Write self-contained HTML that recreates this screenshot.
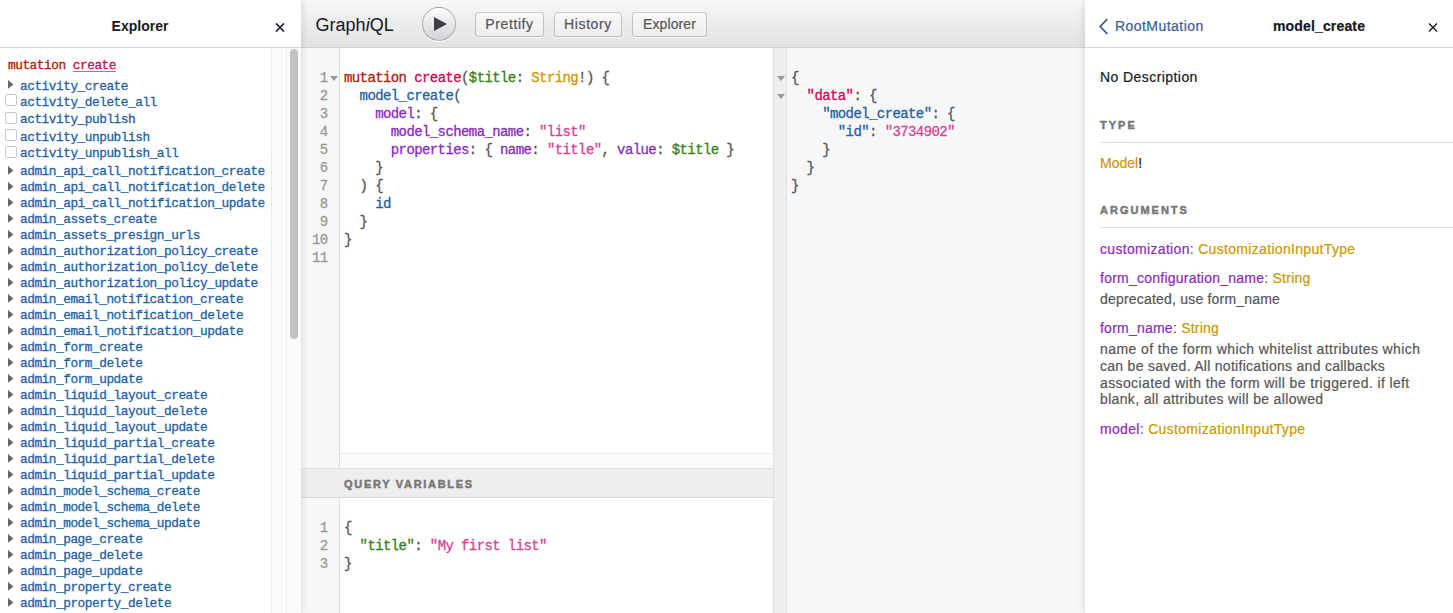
<!DOCTYPE html>
<html><head><meta charset="utf-8">
<style>
*{box-sizing:border-box;margin:0;padding:0}
html,body{width:1453px;height:613px;overflow:hidden;background:#fff;font-family:"Liberation Sans",sans-serif;color:#141823}
.abs{position:absolute}
.mono{font-family:"Liberation Mono",monospace;-webkit-text-stroke:0.3px}
/* explorer */
#exp{left:0;top:0;width:301px;height:613px;background:#fff;box-shadow:0 0 8px rgba(0,0,0,.15);z-index:3}
#exp .hdr{left:0;top:0;width:301px;height:48px;border-bottom:1px solid #d6d6d6;background:#fff}
#exp .ttl{left:0;top:18px;width:280px;text-align:center;font-weight:bold;font-size:14px;line-height:17px}
#list{left:0;top:0;width:271px;height:613px;overflow:hidden}
#list .cb{position:absolute;left:5px;width:12px;height:12px;border:1px solid #c8c8c8;border-radius:2px;background:#fff}
#list .tri{position:absolute;left:8px}
#list .row{position:absolute;left:0;height:16px;white-space:pre;font-size:12.8px;letter-spacing:-0.48px;line-height:16px;color:#1F61A0}
.col1{left:271px;top:48px;width:16px;height:565px;background:#fafafa;border-left:1px solid #ececec;border-right:1px solid #ececec}
.track{left:287px;top:48px;width:14px;height:565px;background:#fafafa}
.thumb{left:290px;top:49px;width:8px;height:290px;background:#c2c2c2;border-radius:4px}
/* graphiql */
#gq{left:301px;top:0;width:784px;height:613px;background:#fff}
.topbar{left:0;top:0;width:784px;height:48px;background:linear-gradient(#f7f7f7,#e2e2e2);border-bottom:1px solid #d0d0d0}
.btn{position:absolute;top:12px;height:25px;letter-spacing:0.6px;padding-top:1px;border-radius:3px;background:linear-gradient(#f9f9f9,#ececec);box-shadow:inset 0 0 0 1px rgba(0,0,0,0.2),0 1px 0 rgba(255,255,255,.7),inset 0 1px #fff;color:#555;font-size:14px;line-height:23px;text-align:center;-webkit-text-stroke:0.2px #555}
.exec{left:121px;top:7px;width:34px;height:34px;border-radius:17px;border:1px solid rgba(0,0,0,.25);background:linear-gradient(#fdfdfd,#d2d3d6);box-shadow:0 1px 0 #fff}
.gutter{left:0;width:39px;background:#f7f7f7;border-right:1px solid #ddd}
.code{position:absolute;white-space:pre;font-size:14px;letter-spacing:-0.6px;line-height:18px;height:18px}
.ln{position:absolute;white-space:pre;font-size:14px;letter-spacing:-0.6px;line-height:18px;height:18px;color:#999;text-align:right;width:26.6px;left:0}
.kw{color:#B11A04}.def{color:#D2054E}.pn{color:#555}.var{color:#397D13}.atom{color:#CA9800}.prop{color:#1F61A0}.str{color:#D64292}.attr{color:#8B2BB9}
.fold{position:absolute;width:0;height:0;border-left:4px solid transparent;border-right:4px solid transparent;border-top:5px solid #999}
/* doc */
#doc{left:1085px;top:0;width:368px;height:613px;background:#fff;box-shadow:0 0 8px rgba(0,0,0,.15)}
.cat{position:absolute;left:15px;right:0;font-size:11px;font-weight:bold;letter-spacing:2px;color:#777;border-bottom:1px solid #e0e0e0}
.dt{position:absolute;left:15px;font-size:14px;line-height:17px;white-space:pre;color:#555;-webkit-text-stroke:0.2px}
.catt{position:absolute;left:15px;font-size:11px;line-height:12px;font-weight:bold;letter-spacing:2px;color:#777;white-space:pre;-webkit-text-stroke:0.5px #777}
.an{color:#8B2BB9}.tn{color:#CA9800}
</style></head><body>

<div id="exp" class="abs">
  <div class="hdr abs"></div>
  <div class="ttl abs">Explorer</div>
  <div class="abs" style="left:275px;top:23px;width:10px;height:9px">
    <svg width="10" height="9" viewBox="0 0 10 9" style="display:block"><path d="M1 0.5 L9 8.5 M9 0.5 L1 8.5" stroke="#141823" stroke-width="1.6"/></svg>
  </div>
  <div id="list" class="abs mono">
<div class="row" style="left:8px;top:57.80px"><span class="kw">mutation</span> <span class="def" style="text-decoration:underline;text-decoration-color:#888;text-underline-offset:2px">create</span></div>
<svg class="tri" style="top:80.20px" width="6" height="9" viewBox="0 0 6 9"><path d="M0 0 L5.4 4.4 L0 8.8Z" fill="#666"/></svg><div class="row" style="left:20px;top:78.60px">activity_create</div>
<span class="cb" style="top:94.30px"></span><div class="row" style="left:20px;top:94.70px">activity_delete_all</div>
<span class="cb" style="top:111.50px"></span><div class="row" style="left:20px;top:111.90px">activity_publish</div>
<span class="cb" style="top:129.20px"></span><div class="row" style="left:20px;top:129.60px">activity_unpublish</div>
<span class="cb" style="top:145.90px"></span><div class="row" style="left:20px;top:146.30px">activity_unpublish_all</div>
<svg class="tri" style="top:165.50px" width="6" height="9" viewBox="0 0 6 9"><path d="M0 0 L5.4 4.4 L0 8.8Z" fill="#666"/></svg><div class="row" style="left:20px;top:163.90px">admin_api_call_notification_create</div>
<svg class="tri" style="top:181.50px" width="6" height="9" viewBox="0 0 6 9"><path d="M0 0 L5.4 4.4 L0 8.8Z" fill="#666"/></svg><div class="row" style="left:20px;top:179.90px">admin_api_call_notification_delete</div>
<svg class="tri" style="top:197.50px" width="6" height="9" viewBox="0 0 6 9"><path d="M0 0 L5.4 4.4 L0 8.8Z" fill="#666"/></svg><div class="row" style="left:20px;top:195.90px">admin_api_call_notification_update</div>
<svg class="tri" style="top:213.50px" width="6" height="9" viewBox="0 0 6 9"><path d="M0 0 L5.4 4.4 L0 8.8Z" fill="#666"/></svg><div class="row" style="left:20px;top:211.90px">admin_assets_create</div>
<svg class="tri" style="top:229.50px" width="6" height="9" viewBox="0 0 6 9"><path d="M0 0 L5.4 4.4 L0 8.8Z" fill="#666"/></svg><div class="row" style="left:20px;top:227.90px">admin_assets_presign_urls</div>
<svg class="tri" style="top:245.50px" width="6" height="9" viewBox="0 0 6 9"><path d="M0 0 L5.4 4.4 L0 8.8Z" fill="#666"/></svg><div class="row" style="left:20px;top:243.90px">admin_authorization_policy_create</div>
<svg class="tri" style="top:261.50px" width="6" height="9" viewBox="0 0 6 9"><path d="M0 0 L5.4 4.4 L0 8.8Z" fill="#666"/></svg><div class="row" style="left:20px;top:259.90px">admin_authorization_policy_delete</div>
<svg class="tri" style="top:277.50px" width="6" height="9" viewBox="0 0 6 9"><path d="M0 0 L5.4 4.4 L0 8.8Z" fill="#666"/></svg><div class="row" style="left:20px;top:275.90px">admin_authorization_policy_update</div>
<svg class="tri" style="top:293.50px" width="6" height="9" viewBox="0 0 6 9"><path d="M0 0 L5.4 4.4 L0 8.8Z" fill="#666"/></svg><div class="row" style="left:20px;top:291.90px">admin_email_notification_create</div>
<svg class="tri" style="top:309.50px" width="6" height="9" viewBox="0 0 6 9"><path d="M0 0 L5.4 4.4 L0 8.8Z" fill="#666"/></svg><div class="row" style="left:20px;top:307.90px">admin_email_notification_delete</div>
<svg class="tri" style="top:325.50px" width="6" height="9" viewBox="0 0 6 9"><path d="M0 0 L5.4 4.4 L0 8.8Z" fill="#666"/></svg><div class="row" style="left:20px;top:323.90px">admin_email_notification_update</div>
<svg class="tri" style="top:341.50px" width="6" height="9" viewBox="0 0 6 9"><path d="M0 0 L5.4 4.4 L0 8.8Z" fill="#666"/></svg><div class="row" style="left:20px;top:339.90px">admin_form_create</div>
<svg class="tri" style="top:357.50px" width="6" height="9" viewBox="0 0 6 9"><path d="M0 0 L5.4 4.4 L0 8.8Z" fill="#666"/></svg><div class="row" style="left:20px;top:355.90px">admin_form_delete</div>
<svg class="tri" style="top:373.50px" width="6" height="9" viewBox="0 0 6 9"><path d="M0 0 L5.4 4.4 L0 8.8Z" fill="#666"/></svg><div class="row" style="left:20px;top:371.90px">admin_form_update</div>
<svg class="tri" style="top:389.50px" width="6" height="9" viewBox="0 0 6 9"><path d="M0 0 L5.4 4.4 L0 8.8Z" fill="#666"/></svg><div class="row" style="left:20px;top:387.90px">admin_liquid_layout_create</div>
<svg class="tri" style="top:405.50px" width="6" height="9" viewBox="0 0 6 9"><path d="M0 0 L5.4 4.4 L0 8.8Z" fill="#666"/></svg><div class="row" style="left:20px;top:403.90px">admin_liquid_layout_delete</div>
<svg class="tri" style="top:421.50px" width="6" height="9" viewBox="0 0 6 9"><path d="M0 0 L5.4 4.4 L0 8.8Z" fill="#666"/></svg><div class="row" style="left:20px;top:419.90px">admin_liquid_layout_update</div>
<svg class="tri" style="top:437.50px" width="6" height="9" viewBox="0 0 6 9"><path d="M0 0 L5.4 4.4 L0 8.8Z" fill="#666"/></svg><div class="row" style="left:20px;top:435.90px">admin_liquid_partial_create</div>
<svg class="tri" style="top:453.50px" width="6" height="9" viewBox="0 0 6 9"><path d="M0 0 L5.4 4.4 L0 8.8Z" fill="#666"/></svg><div class="row" style="left:20px;top:451.90px">admin_liquid_partial_delete</div>
<svg class="tri" style="top:469.50px" width="6" height="9" viewBox="0 0 6 9"><path d="M0 0 L5.4 4.4 L0 8.8Z" fill="#666"/></svg><div class="row" style="left:20px;top:467.90px">admin_liquid_partial_update</div>
<svg class="tri" style="top:485.50px" width="6" height="9" viewBox="0 0 6 9"><path d="M0 0 L5.4 4.4 L0 8.8Z" fill="#666"/></svg><div class="row" style="left:20px;top:483.90px">admin_model_schema_create</div>
<svg class="tri" style="top:501.50px" width="6" height="9" viewBox="0 0 6 9"><path d="M0 0 L5.4 4.4 L0 8.8Z" fill="#666"/></svg><div class="row" style="left:20px;top:499.90px">admin_model_schema_delete</div>
<svg class="tri" style="top:517.50px" width="6" height="9" viewBox="0 0 6 9"><path d="M0 0 L5.4 4.4 L0 8.8Z" fill="#666"/></svg><div class="row" style="left:20px;top:515.90px">admin_model_schema_update</div>
<svg class="tri" style="top:533.50px" width="6" height="9" viewBox="0 0 6 9"><path d="M0 0 L5.4 4.4 L0 8.8Z" fill="#666"/></svg><div class="row" style="left:20px;top:531.90px">admin_page_create</div>
<svg class="tri" style="top:549.50px" width="6" height="9" viewBox="0 0 6 9"><path d="M0 0 L5.4 4.4 L0 8.8Z" fill="#666"/></svg><div class="row" style="left:20px;top:547.90px">admin_page_delete</div>
<svg class="tri" style="top:565.50px" width="6" height="9" viewBox="0 0 6 9"><path d="M0 0 L5.4 4.4 L0 8.8Z" fill="#666"/></svg><div class="row" style="left:20px;top:563.90px">admin_page_update</div>
<svg class="tri" style="top:581.50px" width="6" height="9" viewBox="0 0 6 9"><path d="M0 0 L5.4 4.4 L0 8.8Z" fill="#666"/></svg><div class="row" style="left:20px;top:579.90px">admin_property_create</div>
<svg class="tri" style="top:597.50px" width="6" height="9" viewBox="0 0 6 9"><path d="M0 0 L5.4 4.4 L0 8.8Z" fill="#666"/></svg><div class="row" style="left:20px;top:595.90px">admin_property_delete</div>
</div>
  <div class="col1 abs"></div>
  <div class="track abs"></div>
  <div class="thumb abs"></div>
</div>

<div id="gq" class="abs">
  <div class="topbar abs"></div>
  <div class="abs" style="left:14.6px;top:13.3px;font-size:18px;line-height:24px;white-space:pre">Graph<i>i</i>QL</div>
  <div class="exec abs"><svg width="34" height="34" viewBox="0 0 34 34" style="position:absolute;left:-1px;top:-1px"><path d="M12 10 L25 17 L12 24 Z" fill="#3d3e43"/></svg></div>
  <div class="btn" style="left:174px;width:69px">Prettify</div>
  <div class="btn" style="left:253px;width:68px">History</div>
  <div class="btn" style="left:331px;width:75px;letter-spacing:0.1px">Explorer</div>
  <!-- query editor -->
  <div class="abs" style="left:0;top:48px;width:472px;height:420px;background:#fff"></div>
  <div class="gutter abs" style="top:48px;height:405px"></div>
  <div class="abs" style="left:0;top:453px;width:39px;height:15px;background:#f7f7f7;border-right:1px solid #ddd"></div>
  <div class="abs" style="left:39px;top:453px;width:433px;height:15px;background:#fafafa;border-top:1px solid #e8e8e8"></div>
  <div class="ln mono" style="top:69.04px">1</div>
<div class="code mono" style="left:43px;top:69.04px"><span class="kw">mutation</span> <span class="def">create</span><span class="pn">(</span><span class="var">$title</span><span class="pn">: </span><span class="atom">String</span><span class="pn">!) {</span></div>
<div class="ln mono" style="top:87.04px">2</div>
<div class="code mono" style="left:43px;top:87.04px">  <span class="prop">model_create</span><span class="pn">(</span></div>
<div class="ln mono" style="top:105.04px">3</div>
<div class="code mono" style="left:43px;top:105.04px">    <span class="attr">model</span><span class="pn">: {</span></div>
<div class="ln mono" style="top:123.04px">4</div>
<div class="code mono" style="left:43px;top:123.04px">      <span class="attr">model_schema_name</span><span class="pn">: </span><span class="str">"list"</span></div>
<div class="ln mono" style="top:141.04px">5</div>
<div class="code mono" style="left:43px;top:141.04px">      <span class="attr">properties</span><span class="pn">: { </span><span class="attr">name</span><span class="pn">: </span><span class="str">"title"</span><span class="pn">, </span><span class="attr">value</span><span class="pn">: </span><span class="var">$title</span><span class="pn"> }</span></div>
<div class="ln mono" style="top:159.04px">6</div>
<div class="code mono" style="left:43px;top:159.04px">    <span class="pn">}</span></div>
<div class="ln mono" style="top:177.04px">7</div>
<div class="code mono" style="left:43px;top:177.04px">  <span class="pn">) {</span></div>
<div class="ln mono" style="top:195.04px">8</div>
<div class="code mono" style="left:43px;top:195.04px">    <span class="prop">id</span></div>
<div class="ln mono" style="top:213.04px">9</div>
<div class="code mono" style="left:43px;top:213.04px">  <span class="pn">}</span></div>
<div class="ln mono" style="top:231.04px">10</div>
<div class="code mono" style="left:43px;top:231.04px"><span class="pn">}</span></div>
<div class="ln mono" style="top:249.04px">11</div>
<div class="fold" style="left:29.4px;top:76px"></div>
  <!-- variables -->
  <div class="abs" style="left:0;top:468px;width:472px;height:30px;background:#eee;border-top:1px solid #e0e0e0;border-bottom:1px solid #d6d6d6"></div>
  <div class="abs" style="left:43px;top:477px;font-size:11px;line-height:14px;font-weight:bold;letter-spacing:1.7px;color:#777;-webkit-text-stroke:0.5px #777">QUERY VARIABLES</div>
  <div class="gutter abs" style="top:498px;height:115px"></div>
  <div class="ln mono" style="top:519.04px">1</div>
<div class="code mono" style="left:43px;top:519.04px"><span class="pn">{</span></div>
<div class="ln mono" style="top:537.04px">2</div>
<div class="code mono" style="left:43px;top:537.04px">  <span class="var">"title"</span><span class="pn">: </span><span class="str">"My first list"</span></div>
<div class="ln mono" style="top:555.04px">3</div>
<div class="code mono" style="left:43px;top:555.04px"><span class="pn">}</span></div>
  <!-- results -->
  <div class="abs" style="left:472px;top:48px;width:312px;height:565px;background:#f6f7f8;border-left:1px solid #e0e0e0"></div>
  <div class="abs" style="left:473px;top:48px;width:13px;height:565px;background:#eee;border-right:1px solid #e0e0e0"></div>
  <div class="code mono" style="left:490px;top:69.04px"><span class="pn">{</span></div>
<div class="code mono" style="left:490px;top:87.04px">  <span class="def">"data"</span><span class="pn">: {</span></div>
<div class="code mono" style="left:490px;top:105.04px">    <span class="prop">"model_create"</span><span class="pn">: {</span></div>
<div class="code mono" style="left:490px;top:123.04px">      <span class="prop">"id"</span><span class="pn">: </span><span class="str">"3734902"</span></div>
<div class="code mono" style="left:490px;top:141.04px">    <span class="pn">}</span></div>
<div class="code mono" style="left:490px;top:159.04px">  <span class="pn">}</span></div>
<div class="code mono" style="left:490px;top:177.04px"><span class="pn">}</span></div>
<div class="fold" style="left:476px;top:76px"></div><div class="fold" style="left:476px;top:94px"></div>
</div>

<div id="doc" class="abs">
<div class="abs" style="left:0;top:47px;width:368px;height:1px;background:#d6d6d6"></div>
<svg class="abs" style="left:13px;top:18px" width="11" height="17" viewBox="0 0 11 17"><path d="M9.3 1.2 L2.2 8.5 L9.3 15.8" fill="none" stroke="#3B5998" stroke-width="1.7"/></svg>
<div class="dt" style="left:30px;top:18px;color:#3B5998;letter-spacing:0.45px">RootMutation</div>
<div class="dt" style="left:188px;top:18px;color:#141823;font-weight:bold;letter-spacing:0.15px">model_create</div>
<svg class="abs" style="left:343px;top:23px" width="10" height="9" viewBox="0 0 10 9"><path d="M1 0.5 L9 8.5 M9 0.5 L1 8.5" stroke="#141823" stroke-width="1.4"/></svg>
<div class="dt" style="left:15px;top:69px;color:#141823;letter-spacing:0.43px">No Description</div>
<div class="dt" style="left:15px;top:155px;"><span class="tn">Model</span><span style="color:#141823">!</span></div>
<div class="dt" style="left:15px;top:241px;letter-spacing:0.32px"><span class="an">customization</span>: <span class="tn">CustomizationInputType</span></div>
<div class="dt" style="left:15px;top:270px;letter-spacing:0.24px"><span class="an">form_configuration_name</span>: <span class="tn">String</span></div>
<div class="dt" style="left:15px;top:291px;letter-spacing:0.2px">deprecated, use form_name</div>
<div class="dt" style="left:15px;top:320px;letter-spacing:0.23px"><span class="an">form_name</span>: <span class="tn">String</span></div>
<div class="dt" style="left:15px;top:341px;letter-spacing:0.41px">name of the form which whitelist attributes which</div>
<div class="dt" style="left:15px;top:358px;letter-spacing:0.28px">can be saved. All notifications and callbacks</div>
<div class="dt" style="left:15px;top:375px;letter-spacing:0.38px">associated with the form will be triggered. if left</div>
<div class="dt" style="left:15px;top:391px;letter-spacing:0.34px">blank, all attributes will be allowed</div>
<div class="dt" style="left:15px;top:421px;letter-spacing:0.32px"><span class="an">model</span>: <span class="tn">CustomizationInputType</span></div>
<div class="catt" style="top:118.90px">TYPE</div><div class="abs" style="left:15px;top:142px;width:353px;height:1px;background:#e0e0e0"></div>
<div class="catt" style="top:204.30px">ARGUMENTS</div><div class="abs" style="left:15px;top:227px;width:353px;height:1px;background:#e0e0e0"></div>
</div>

</body></html>
